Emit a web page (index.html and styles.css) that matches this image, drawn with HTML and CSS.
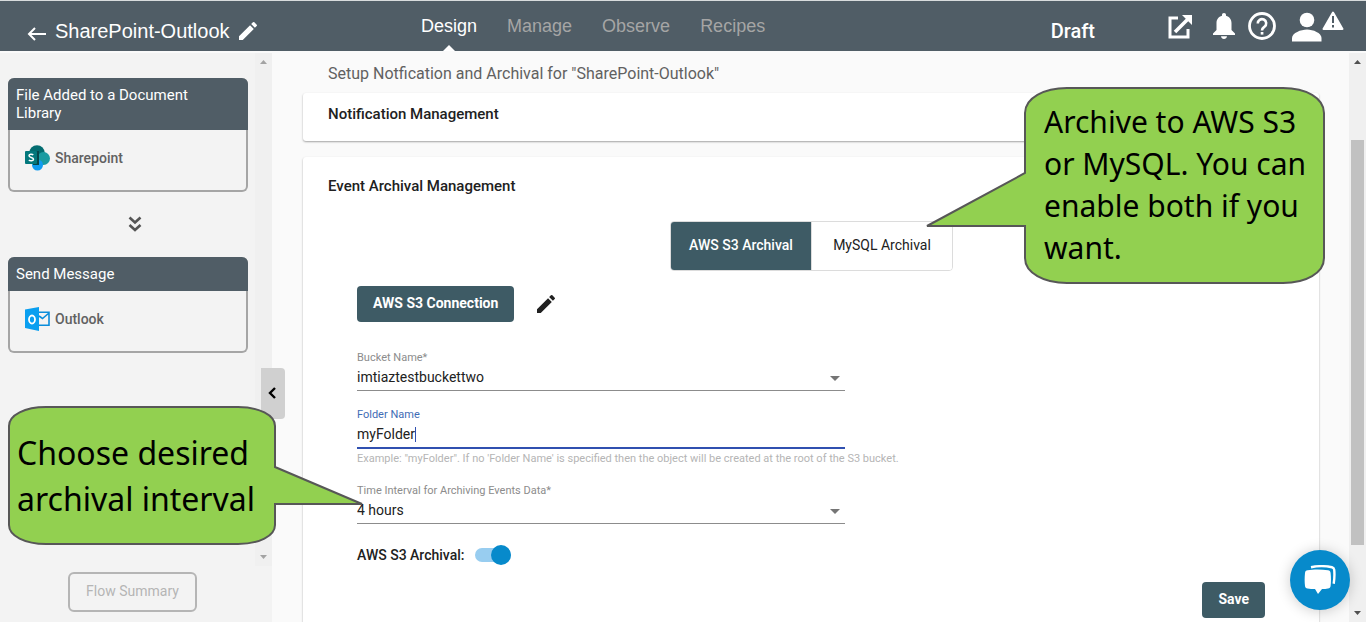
FILE: index.html
```html
<!DOCTYPE html>
<html lang="en">
<head>
<meta charset="utf-8">
<title>SharePoint-Outlook</title>
<link rel="stylesheet" href="styles.css">
</head>
<body>
<header class="topbar">
  <div class="flow-name">
    <button class="icon-button" aria-label="Back"><svg width="20" height="14" viewBox="0 0 20 14"><path d="M19 7H2M8 1L2 7l6 6" fill="none" stroke="currentColor" stroke-width="2"/></svg></button>
    <h1 class="flow-title">SharePoint-Outlook</h1>
    <button class="icon-button" aria-label="Rename"><svg width="20" height="20" viewBox="2 2 20 20"><path fill="currentColor" d="M3 17.25V21h3.75L17.81 9.940l-3.750-3.750zM20.710 7.040a1 1 0 0 0 0-1.410l-2.340-2.340a1 1 0 0 0-1.410 0l-1.830 1.830 3.750 3.750z"/></svg></button>
  </div>
  <nav class="tabs">
    <a class="tab tab-active" href="#">Design</a>
    <a class="tab" href="#">Manage</a>
    <a class="tab" href="#">Observe</a>
    <a class="tab" href="#">Recipes</a>
  </nav>
  <span class="status">Draft</span>
  <div class="tools">
    <button class="icon-button open" aria-label="Open"><svg width="25" height="25" viewBox="1 0 25 25"><path d="M11 4H3v19h18v-8" fill="none" stroke="currentColor" stroke-width="3"/><path d="M8 18L21 5" stroke="currentColor" stroke-width="3.500"/><path d="M15 1h10v10z" fill="currentColor"/></svg></button>
    <button class="icon-button" aria-label="Notifications"><svg width="22" height="26" viewBox="0 0 22 26"><path fill="currentColor" d="M11 0c1.300 0 2 .8 2 2v.7c3.500.9 5.500 3.800 5.500 7.300v7L22 20.500V22H0v-1.500L3.500 17v-7C3.500 6.500 5.500 3.600 9 2.700V2c0-1.200.7-2 2-2zM8 23.200h6c-.3 1.800-1.400 2.800-3 2.800s-2.700-1-3-2.800z"/></svg></button>
    <button class="icon-button" aria-label="Help"><svg width="28" height="28" viewBox="0 0 28 28"><circle cx="14" cy="14" r="12.500" fill="none" stroke="currentColor" stroke-width="2.800"/><path d="M9.800 11.500a4.200 4.200 0 1 1 6.700 3.200C15 15.800 14 16.400 14 18.500" fill="none" stroke="currentColor" stroke-width="2.600"/><path d="M12.700 20h2.700v2.600h-2.700z" fill="currentColor"/></svg></button>
    <button class="icon-button account" aria-label="Account"><svg width="52" height="31" viewBox="0 0 52 31"><circle cx="15" cy="9" r="7.300" fill="currentColor"/><path d="M0 30.500V27c0-5 9-8.500 15-8.500S29.500 22 29.500 27v3.500z" fill="currentColor"/><path d="M41 1.500L50.500 18h-19z" fill="currentColor" stroke="currentColor" stroke-width="2" stroke-linejoin="round"/><path d="M41 5v7M41 14v2.500" stroke="#505d66" stroke-width="2"/></svg></button>
  </div>
</header>

<div class="workspace">
  <aside class="sidebar">
    <div class="steps-area">
      <div class="steps">
        <section class="step">
          <h2 class="step-title">File Added to a Document Library</h2>
          <div class="step-app">
            <svg width="25" height="26" viewBox="0 0 25 26"><circle cx="12" cy="8" r="7.800" fill="#036c70"/><circle cx="18.500" cy="13.500" r="6.500" fill="#1a9ba1"/><circle cx="12.500" cy="20" r="5.500" fill="#109cf1"/><path d="M8 6h6v14H8z" fill="#06474b"/><rect y="6" width="12" height="13" rx="1" fill="#03787c"/><path d="M8.300 9.800C7 8.800 4 8.900 4 10.800c0 2 4.500 1.300 4.500 3.400 0 2-3.200 2-4.700 1" fill="none" stroke="#fff" stroke-width="1.500"/></svg>
            <span>Sharepoint</span>
          </div>
        </section>
        <svg class="flow-arrow" width="14" height="16" viewBox="0 0 14 16"><path d="M1.500 1.500L7 6.500l5.500-5M1.500 9L7 14l5.500-5" fill="none" stroke="currentColor" stroke-width="2.600"/></svg>
        <section class="step">
          <h2 class="step-title">Send Message</h2>
          <div class="step-app">
            <svg width="25" height="24" viewBox="0 0 25 24"><path d="M0 2.500L14 0v24L0 21z" fill="#0a9ff0"/><ellipse cx="7" cy="12.500" rx="3" ry="4" fill="none" stroke="#fff" stroke-width="1.800"/><path d="M14 5.200h10v13H14M14 9l3.500 2.500L24 6" fill="none" stroke="#0a8ddb" stroke-width="1.600"/></svg>
            <span>Outlook</span>
          </div>
        </section>
      </div>
      <div class="scroll-track" aria-hidden="true">
        <svg class="scroll-arrow" width="7" height="4"><path d="M0 4L3.500 0 7 4z" fill="currentColor"/></svg>
        <svg class="scroll-arrow" width="7" height="4"><path d="M0 0L3.500 4 7 0z" fill="currentColor"/></svg>
      </div>
    </div>
    <div class="sidebar-footer"><button class="summary-button">Flow Summary</button></div>
    <button class="collapse" aria-label="Collapse"><svg width="8" height="12" viewBox="0 0 8 12"><path d="M7 1L2 6l5 5" fill="none" stroke="#000" stroke-width="2.400"/></svg></button>
  </aside>

  <main class="content">
    <p class="subtitle">Setup Notfication and Archival for "SharePoint-Outlook"</p>
    <section class="card card-compact"><h2 class="card-title">Notification Management</h2></section>
    <section class="card card-tall">
      <h2 class="card-title">Event Archival Management</h2>
      <div class="segments">
        <button class="segment segment-on">AWS S3 Archival</button>
        <button class="segment">MySQL Archival</button>
      </div>
      <form class="form">
        <div class="connection">
          <button type="button" class="primary">AWS S3 Connection</button>
          <button type="button" class="icon-button dark" aria-label="Edit connection"><svg width="20" height="20" viewBox="2 2 20 20"><path fill="currentColor" d="M3 17.250V21h3.750L17.810 9.940l-3.750-3.750zM20.710 7.040a1 1 0 0 0 0-1.410l-2.340-2.340a1 1 0 0 0-1.410 0l-1.830 1.830 3.750 3.750z"/></svg></button>
        </div>
        <div class="field">
          <label for="bucket">Bucket Name*</label>
          <div class="control"><select id="bucket"><option>imtiaztestbuckettwo</option></select><svg class="drop" width="10" height="5"><path d="M0 0h10L5 5z" fill="currentColor"/></svg></div>
        </div>
        <div class="field field-focus">
          <label for="folder">Folder Name</label>
          <div class="control"><input id="folder" type="text" value="myFolder"><span class="caret"></span></div>
          <p class="hint">Example: "myFolder". If no 'Folder Name' is specified then the object will be created at the root of the S3 bucket.</p>
        </div>
        <div class="field">
          <label for="interval">Time Interval for Archiving Events Data*</label>
          <div class="control"><select id="interval"><option>4 hours</option></select><svg class="drop" width="10" height="5"><path d="M0 0h10L5 5z" fill="currentColor"/></svg></div>
        </div>
        <div class="toggle-row"><label for="enable">AWS S3 Archival:</label><input class="toggle" id="enable" type="checkbox" checked></div>
        <div class="actions"><button type="button" class="primary">Save</button></div>
      </form>
    </section>
  </main>
  <div class="scroll-track page-track" aria-hidden="true">
    <svg class="scroll-arrow" width="7" height="4"><path d="M0 4L3.500 0 7 4z" fill="currentColor"/></svg>
    <div class="scroll-thumb"></div>
    <svg class="scroll-arrow" width="7" height="4"><path d="M0 0L3.500 4 7 0z" fill="currentColor"/></svg>
  </div>
</div>

<div class="callout callout-archive">
  <svg class="callout-shape" width="400" height="198" viewBox="0 0 400 198"><path d="M142 1H358C381 1 399 11 399 26V171C399 186 381 196 358 196H142C119 196 100 186 100 171V139H2L100 86V26C100 11 119 1 142 1z"/></svg>
  <p class="callout-text">Archive to AWS S3<br>or MySQL. You can<br>enable both if you<br>want.</p>
</div>
<div class="callout callout-interval">
  <svg class="callout-shape" width="358" height="140" viewBox="0 0 358 140"><path d="M38 1H230C251 1 267 9 267 20V61L354 98H267V119C267 130 251 138 230 138H38C17 138 1 130 1 119V20C1 9 17 1 38 1z"/></svg>
  <p class="callout-text">Choose desired<br>archival interval</p>
</div>
<button class="chat" aria-label="Chat"><svg width="32" height="30" viewBox="0 0 32 30"><path d="M7 2.200C14 .8 21 .8 28 2.200c1.500.3 2 1 2.200 2.500.5 5 .3 9-.5 14" fill="none" stroke="#fff" stroke-width="2.400"/><path d="M3.500 5.300c6-1 14-1 20.500 0 1.500.2 2.400 1 2.600 2.600.5 4.500.5 9 0 13-.2 1.500-1 2.300-2.600 2.500-2 .3-3.500.5-6 .6L14 29l-3-5c-3-.1-5-.3-7.500-.6C2 23.200 1.200 22.400 1 20.900.5 17 .5 12.400 1 7.900 1.200 6.300 2 5.500 3.500 5.300z" fill="#fff"/></svg></button>
</body>
</html>
```
FILE: styles.css
```css
* { box-sizing: border-box; }
body {
  margin: 0;
  height: 100vh;
  display: flex;
  flex-direction: column;
  overflow: hidden;
  position: relative;
  background: #fafafa;
  color: #212121;
  font: 14px/18px Roboto, "Liberation Sans", sans-serif;
}
h1, h2, p { margin: 0; }
button, input, select { font: inherit; color: inherit; }
button { border: 0; padding: 0; cursor: pointer; }
svg { display: block; flex: none; }
.icon-button { background: none; }
.dark { color: #212121; }

.topbar {
  flex: none;
  display: flex;
  height: 51px;
  border-top: 1px solid #d8dcdd;
  background: #505d66;
  color: #fff;
}
.flow-name { display: flex; align-items: center; gap: 8px; width: 421px; padding: 10px 0 0 27px; }
.flow-name .icon-button:first-child { padding-top: 5px; }
.flow-title { font: 20px/24px "Liberation Sans", Arial, sans-serif; }
.tabs { display: flex; gap: 30px; font: 18px/50px "Liberation Sans", Arial, sans-serif; }
.tab { position: relative; color: #a5a5a5; text-decoration: none; }
.tab-active { color: #fff; }
.tab-active::after {
  content: "";
  position: absolute;
  left: 50%;
  bottom: 0;
  margin-left: -6px;
  border: 6px solid transparent;
  border-top: 0;
  border-bottom-color: #fff;
}
.status { margin-left: auto; padding-top: 18px; font-size: 20px; line-height: 24px; font-weight: 500; }
.tools { display: flex; align-items: center; gap: 13px; padding: 0 22px 0 73px; }
.open { margin-right: 7px; }
.account { margin-left: 3px; }

.workspace { flex: 1; min-height: 0; display: flex; padding-top: 2px; }
.sidebar { position: relative; flex: none; width: 272px; display: flex; flex-direction: column; background: #f3f3f3; }
.steps-area { flex: 1; display: flex; min-height: 0; }
.steps { flex: 1; display: flex; flex-direction: column; align-items: center; padding: 25px 7px 0 8px; }
.step { width: 100%; border: 2px solid #a5a5a5; border-top: 0; border-radius: 6px; }
.step-title {
  margin: 0 -2px;
  padding: 8px 40px 8px 8px;
  border-radius: 6px 6px 0 0;
  background: #505d66;
  color: #fff;
  font-size: 15px;
  line-height: 18px;
  font-weight: 400;
}
.step-app { display: flex; align-items: center; gap: 5px; height: 60px; padding: 0 15px 4px; color: #616161; font-weight: 500; }
.flow-arrow { margin: 24px 0 25px 13px; color: #555; }
.scroll-track {
  flex: none;
  width: 17px;
  display: flex;
  flex-direction: column;
  align-items: center;
  padding: 7px 0;
  background: #f0f0f0;
  color: #a3a3a3;
}
.scroll-arrow:last-child { margin-top: auto; }
.page-track { color: #505050; }
.scroll-thumb { width: 13px; flex: 0 1 405px; margin-top: 76px; background: #c1c1c1; }
.sidebar-footer { flex: none; padding: 6px 0 10px 68px; }
.summary-button {
  width: 129px;
  height: 40px;
  padding-bottom: 2px;
  border: 2px solid #b5b5b5;
  border-radius: 6px;
  background: none;
  color: #b5b5b5;
}
.collapse {
  position: absolute;
  right: -13px;
  top: 315px;
  width: 24px;
  height: 51px;
  display: grid;
  place-items: center;
  padding: 0 2px 2px 0;
  border-radius: 0 4px 4px 0;
  background: #d0d0d0;
}

.content { flex: 1; min-width: 0; overflow: hidden; padding: 11px 30px 0 31px; display: flex; flex-direction: column; }
.subtitle { padding-left: 25px; font-size: 16px; line-height: 20px; color: #616161; }
.card {
  flex: none;
  padding: 12px 24px 18px 25px;
  background: #fff;
  border-radius: 3px;
  box-shadow: 0 1px 2px rgba(0, 0, 0, .35);
}
.card-compact { margin: 9px 0 16px; }
.card-tall { padding-top: 20px; }
.card-title { font-size: 15px; line-height: 18px; font-weight: 500; }
.segments { display: flex; width: max-content; margin: 26px auto 15px; border: 1px solid #dcdcdc; border-radius: 4px; overflow: hidden; }
.segment { width: 141px; height: 48px; padding-bottom: 2px; background: #fff; border-left: 1px solid #dcdcdc; }
.segment-on { width: 140px; background: #3e5b65; color: #fff; border: 0; font-weight: 500; }
.form { padding: 0 30px 0 29px; display: flex; flex-direction: column; gap: 16px; }
.connection { display: flex; align-items: center; gap: 22px; margin-bottom: 12px; }
.primary { height: 36px; padding: 0 16px 2px; border-radius: 4px; background: #3e5b65; color: #fff; font-weight: 700; }
.field { max-width: 488px; font-size: 14px; }
.field label { display: block; font-size: 11px; line-height: 16px; color: #8c8c8c; }
.control { position: relative; display: flex; align-items: center; border-bottom: 1px solid #8c8c8c; }
.control select, .control input {
  appearance: none;
  flex: 1;
  width: 100%;
  height: 24px;
  padding: 0 0 2px;
  border: 0;
  outline: 0;
  background: none;
}
.drop { position: absolute; right: 5px; color: #757575; pointer-events: none; }
.field-focus label { color: #3f6cb5; }
.field-focus .control { border-bottom: 2px solid #3050b0; }
.caret { position: absolute; left: 58px; top: 4px; width: 1px; height: 15px; background: #3050b0; }
.hint { padding-top: 2px; font-size: 11px; line-height: 16px; white-space: nowrap; color: #b5b5b5; }
.toggle-row { display: flex; align-items: center; gap: 10px; padding-top: 4px; height: 26px; font-weight: 500; }
.toggle {
  appearance: none;
  position: relative;
  width: 36px;
  height: 14px;
  margin: 0;
  border-radius: 7px;
  background: #98cdf0;
}
.toggle::after {
  content: "";
  position: absolute;
  right: 0;
  top: -3px;
  width: 20px;
  height: 20px;
  border-radius: 50%;
  background: #078acb;
}
.actions { display: flex; justify-content: flex-end; }

.callout { position: absolute; color: #000; font-family: "Noto Sans", "Open Sans", sans-serif; }
.callout-shape { overflow: visible; }
.callout-shape path { fill: #92d050; stroke: #575757; stroke-width: 2; }
.callout-text { position: absolute; white-space: nowrap; }
.callout-archive { right: 41px; top: 87px; }
.callout-archive .callout-text { left: 119px; top: 14px; font-size: 30px; line-height: 42px; }
.callout-interval { left: 8px; top: 406px; }
.callout-interval .callout-text { left: 9px; top: 24px; font-size: 32px; line-height: 46px; }
.chat {
  position: absolute;
  right: 16px;
  bottom: 12px;
  width: 60px;
  height: 60px;
  display: grid;
  place-items: center;
  border-radius: 50%;
  background: #078acb;
  box-shadow: 0 1px 14px rgba(0, 0, 0, .2);
}
```
